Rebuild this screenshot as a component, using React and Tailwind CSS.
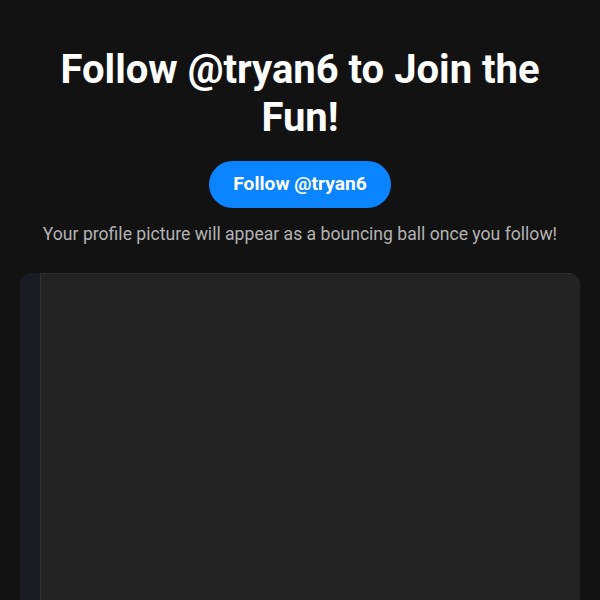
import React from 'react';

export default function App() {
    return (
        <div className="h-screen overflow-hidden bg-[#121212] text-white font-['Roboto',sans-serif] flex flex-col items-center px-5 pt-[46px]">
            {/* Heading */}
            <h1 className="shrink-0 text-[40px] font-bold leading-[48px] text-center max-w-[500px]">
                Follow @tryan6 to Join the Fun!
            </h1>

            {/* Follow button */}
            <button className="shrink-0 mt-[19px] h-[47px] px-6 rounded-full bg-[#0a84ff] text-white text-[19.2px] font-bold">
                Follow @tryan6
            </button>

            <p className="shrink-0 mt-[14px] text-[17.6px] leading-6 text-[#b3b3b3]">
                Your profile picture will appear as a bouncing ball once you follow!
            </p>

            {/* Ball area */}
            <div className="mt-[27px] w-full h-[400px] shrink-0 rounded-xl overflow-hidden flex bg-[#232323]">
                <div className="w-5 bg-[#1a1b23]"></div>
                <div className="flex-1 bg-[#232323] border-l border-t border-[#303030]"></div>
            </div>
        </div>
    );
}
